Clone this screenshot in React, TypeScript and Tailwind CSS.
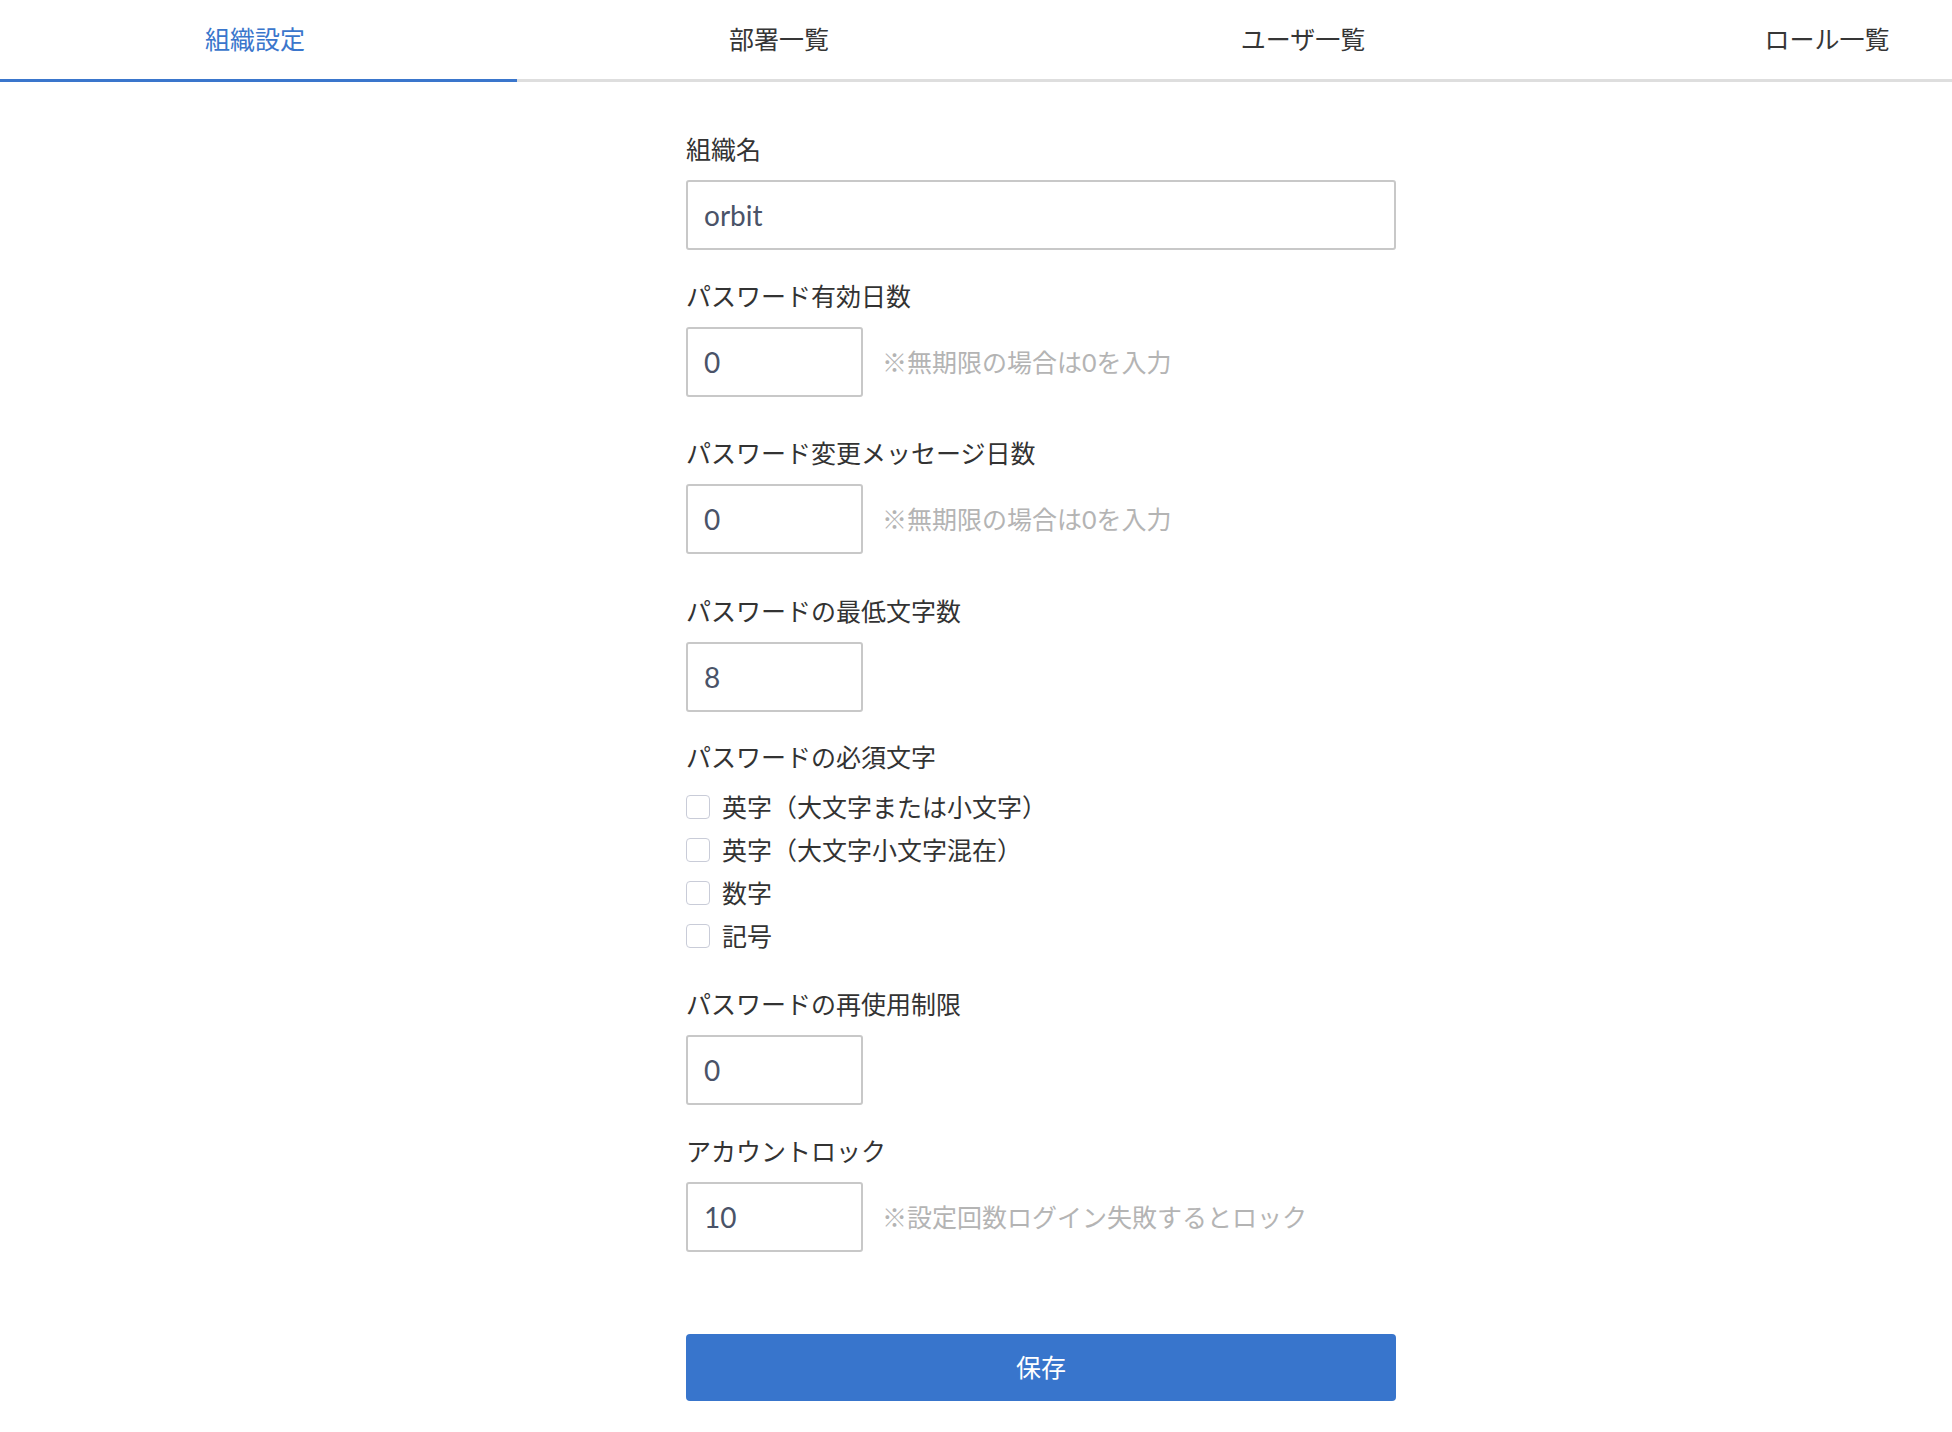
import React from 'react';

const tabs = ['組織設定', '部署一覧', 'ユーザ一覧', 'ロール一覧'];

const font = { fontFamily: 'Lato, "Noto Sans CJK JP", sans-serif' };

function Label({ children }: { children: React.ReactNode }) {
  return <div className="text-[25px] leading-[36px] text-[#333333] mb-[13px]">{children}</div>;
}

function NumberField({ value, note }: { value: string; note?: string }) {
  return (
    <div className="flex items-center">
      <input
        readOnly
        value={value}
        className="w-[177px] h-[70px] border-2 border-[#c8c8c8] rounded-[3px] px-[16px] text-[28px] text-[#4a5368] bg-white outline-none"
        style={font}
      />
      {note && <span className="ml-[19px] text-[25px] text-[#b4b4b4] leading-[36px]">{note}</span>}
    </div>
  );
}

export default function App() {
  return (
    <div className="w-full overflow-hidden bg-white min-h-[1432px]" style={font}>
      <div className="w-[2082px]">
        <nav className="flex w-[2096px] -ml-[7px] border-b-[3px] border-[#dedede]">
          {tabs.map((t, i) => (
            <div
              key={t}
              className={`flex-1 h-[82px] flex items-center justify-center text-[25px] -mb-[3px] border-b-[3px] ${
                i === 0 ? 'text-[#3a76cc] border-[#3a76cc]' : 'text-[#363636] border-transparent'
              }`}
            >
              {t}
            </div>
          ))}
        </nav>

        <form className="w-[710px] mx-auto pt-[49px] pb-[30px]">
          <Label>組織名</Label>
          <input
            readOnly
            value="orbit"
            className="w-full h-[70px] border-2 border-[#c8c8c8] rounded-[3px] px-[16px] text-[28px] text-[#4a5368] bg-white outline-none"
            style={font}
          />

          <div className="mt-[28px]">
            <Label>パスワード有効日数</Label>
            <NumberField value="0" note="※無期限の場合は0を入力" />
          </div>

          <div className="mt-[38px]">
            <Label>パスワード変更メッセージ日数</Label>
            <NumberField value="0" note="※無期限の場合は0を入力" />
          </div>

          <div className="mt-[39px]">
            <Label>パスワードの最低文字数</Label>
            <NumberField value="8" />
          </div>

          <div className="mt-[27px]">
            <div className="text-[25px] leading-[36px] text-[#333333]">パスワードの必須文字</div>
            <div className="mt-[10px] flex flex-col">
              {['英字（大文字または小文字）', '英字（大文字小文字混在）', '数字', '記号'].map((c) => (
                <label key={c} className="h-[43px] flex items-center">
                  <span className="w-[24px] h-[24px] border border-[#c9ccd8] rounded-[4px] bg-white shrink-0" />
                  <span className="ml-[12px] text-[25px] text-[#333333] leading-[36px]">{c}</span>
                </label>
              ))}
            </div>
          </div>

          <div className="mt-[29px]">
            <Label>パスワードの再使用制限</Label>
            <NumberField value="0" />
          </div>

          <div className="mt-[28px]">
            <Label>アカウントロック</Label>
            <NumberField value="10" note="※設定回数ログイン失敗するとロック" />
          </div>

          <button
            type="button"
            className="mt-[82px] w-full h-[67px] rounded-[4px] bg-[#3875cc] text-white text-[25px]"
          >
            保存
          </button>
        </form>
      </div>
    </div>
  );
}
